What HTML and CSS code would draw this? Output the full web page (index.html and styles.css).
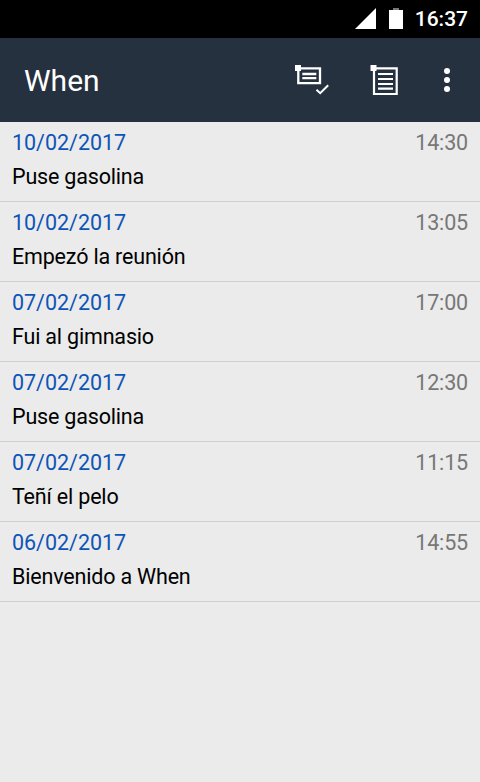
FILE: index.html
```html
<!DOCTYPE html>
<html lang="es">
<head>
<meta charset="utf-8">
<title>When</title>
<link rel="stylesheet" href="styles.css">
</head>
<body>
<div class="status">
  <svg class="signal" width="22" height="22" viewBox="0 0 22 22"><path d="M0 21L21 0V21Z" fill="#fff"/></svg>
  <svg class="battery" width="14" height="22" viewBox="0 0 14 22"><path d="M4 0H10V2H4Z" fill="#777"/><path d="M0 2H14V21H0Z" fill="#fff"/></svg>
  <span class="clock">16:37</span>
</div>
<header class="bar">
  <h1 class="title">When</h1>
  <svg class="icon-check" width="35" height="32" viewBox="0 0 35 32" fill="none" stroke="#fff" stroke-width="2.3"><path d="M3.3 4.3H25V19.2H3.3ZM7.3 10H21.3M7.3 14.2H21.3"/><path d="M21.5 25.7L25.2 29.2L33.2 21.3" stroke-width="2"/><path d="M0 1H6V7H0Z" fill="#fff" stroke="none"/></svg>
  <svg class="icon-list" width="28" height="32" viewBox="0 0 28 32" fill="none" stroke="#fff" stroke-width="2.2"><path d="M4 4.3H26.7V30H4ZM8 10H23M8 15H23M8 20H23M8 24.7H23"/><path d="M.5 1H6.5V7H.5Z" fill="#fff" stroke="none"/></svg>
  <svg class="icon-more" width="6" height="26" viewBox="0 0 6 26" fill="#fff"><circle cx="3" cy="4" r="3"/><circle cx="3" cy="13" r="3"/><circle cx="3" cy="22" r="3"/></svg>
</header>
<main class="list">
  <article class="row"><div class="meta"><span class="date">10/02/2017</span><span class="time">14:30</span></div><div class="text">Puse gasolina</div></article>
  <article class="row"><div class="meta"><span class="date">10/02/2017</span><span class="time">13:05</span></div><div class="text">Empezó la reunión</div></article>
  <article class="row"><div class="meta"><span class="date">07/02/2017</span><span class="time">17:00</span></div><div class="text">Fui al gimnasio</div></article>
  <article class="row"><div class="meta"><span class="date">07/02/2017</span><span class="time">12:30</span></div><div class="text">Puse gasolina</div></article>
  <article class="row"><div class="meta"><span class="date">07/02/2017</span><span class="time">11:15</span></div><div class="text">Teñí el pelo</div></article>
  <article class="row"><div class="meta"><span class="date">06/02/2017</span><span class="time">14:55</span></div><div class="text">Bienvenido a When</div></article>
</main>
</body>
</html>
```
FILE: styles.css
```css
* { box-sizing: border-box; }
body { margin: 0; height: 782px; overflow: hidden; background: #ebebeb; font-family: Roboto, "Noto Sans", sans-serif; }
.status { height: 38px; padding: 0 12px; background: #000; color: #fff; display: flex; align-items: center; justify-content: flex-end; }
.battery { margin: 0 12px; }
.clock { font-size: 21px; font-weight: 500; line-height: 40px; }
.bar { height: 84px; padding: 0 30px 0 24px; background: #263140; color: #fff; display: flex; align-items: center; }
.title { margin: 0 auto 0 0; font-size: 30px; font-weight: 400; }
.icon-check { margin-right: 40px; }
.icon-list { margin-right: 46px; }
.row { height: 80px; padding: 4px 12px 0; border-bottom: 1px solid #cfcfcf; font-size: 21.5px; line-height: 34px; }
.meta { display: flex; justify-content: space-between; }
.date { color: #0d54b8; letter-spacing: -.03px; }
.time { color: #777; letter-spacing: -.15px; }
.text { color: #000; letter-spacing: -.18px; }
```
